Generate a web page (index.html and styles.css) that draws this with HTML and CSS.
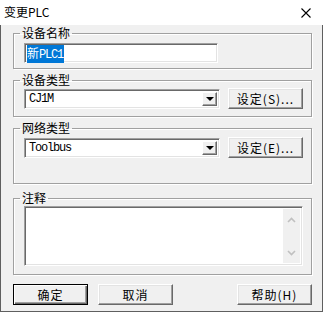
FILE: index.html
```html
<!DOCTYPE html>
<html lang="zh-CN">
<head>
    <meta charset="UTF-8">
    <title>变更PLC</title>
    <link rel="stylesheet" href="styles.css">
</head>
<body>
    <div class="window">
        <div class="titlebar">
            <span class="title">变更PLC</span>
            <svg class="close" width="10" height="10" viewBox="0 0 10 10">
                <path d="M0.5 0.5 L9.5 9.5 M9.5 0.5 L0.5 9.5" stroke="#000" stroke-width="1.1"/>
            </svg>
        </div>

        <div class="content">
            <fieldset class="group group-name">
                <legend>设备名称</legend>
                <div class="edit"><span class="selected">新<span class="mono">PLC1</span></span></div>
            </fieldset>

            <fieldset class="group group-type">
                <legend>设备类型</legend>
                <div class="row">
                    <div class="combo">
                        <span class="combo-text mono">CJ1M</span>
                        <span class="combo-btn"><i class="arrow"></i></span>
                    </div>
                    <button class="btn">设定(S)...</button>
                </div>
            </fieldset>

            <fieldset class="group group-net">
                <legend>网络类型</legend>
                <div class="row">
                    <div class="combo">
                        <span class="combo-text mono">Toolbus</span>
                        <span class="combo-btn"><i class="arrow"></i></span>
                    </div>
                    <button class="btn">设定(E)...</button>
                </div>
            </fieldset>

            <fieldset class="group group-note">
                <legend>注释</legend>
                <div class="memo">
                    <div class="memo-text"></div>
                    <div class="scrollbar">
                        <svg width="9" height="6" viewBox="0 0 9 6"><path d="M1 5 L4.5 1.5 L8 5" fill="none" stroke="#c0c0c0" stroke-width="1.6"/></svg>
                        <svg width="9" height="6" viewBox="0 0 9 6"><path d="M1 1 L4.5 4.5 L8 1" fill="none" stroke="#c0c0c0" stroke-width="1.6"/></svg>
                    </div>
                </div>
            </fieldset>

            <div class="actions">
                <button class="btn btn-default">确定</button>
                <button class="btn">取消</button>
                <span class="spacer"></span>
                <button class="btn">帮助(H)</button>
            </div>
        </div>
    </div>
</body>
</html>
```

FILE: styles.css
```css
* {
    margin: 0;
    padding: 0;
    box-sizing: border-box;
}

body {
    background: #f0f0f0;
    font-family: 'Noto Sans CJK SC', 'Liberation Sans', sans-serif;
    font-size: 12px;
    color: #000;
}

.window {
    width: 323px;
    height: 312px;
    display: flex;
    flex-direction: column;
    background: #f0f0f0;
}

.titlebar {
    height: 25px;
    background: #fff;
    display: flex;
    align-items: center;
    justify-content: space-between;
    padding: 0 12px 0 4px;
}

.title {
    font-size: 12px;
    line-height: 14px;
    padding-bottom: 1px;
}

.content {
    flex: 1;
    border: 1px solid #5f5f5f;
    border-top: none;
    padding: 1px 10px 0 12px;
    display: flex;
    flex-direction: column;
}

/* Group boxes */
.group {
    width: 299px;
    border: 1px solid #a0a0a0;
    box-shadow: inset 1px 1px 0 #fff, 1px 1px 0 #fff;
    padding: 0 7px 0 10px;
    min-width: 0;
}

.group legend {
    margin-left: -4px;
    padding: 0 2px;
    line-height: 14px;
    font-size: 12px;
}

.group-name { padding-top: 3px; padding-bottom: 5px; }
.group-type { margin-top: 4px; padding-top: 1px; padding-bottom: 7px; }
.group-net { margin-top: 4px; padding-top: 2px; padding-bottom: 25px; }
.group-note { margin-top: 7px; padding-top: 1px; padding-bottom: 8px; }

.mono {
    font-family: 'Liberation Mono', monospace;
    letter-spacing: -1.2px;
}

/* Edit box */
.edit {
    width: 194px;
    height: 20px;
    background: #fff;
    border: 1px solid;
    border-color: #a0a0a0 #fff #fff #a0a0a0;
    box-shadow: inset 1px 1px 0 #696969, inset -1px -1px 0 #e3e3e3;
    padding: 1px 0 0 2px;
    display: flex;
    align-items: center;
}

.selected {
    background: #0078d7;
    color: #fff;
    line-height: 15px;
    padding-right: 1px;
}

.row {
    display: flex;
    gap: 8px;
    align-items: center;
}

/* Combo box */
.combo {
    width: 196px;
    height: 20px;
    background: #fff;
    border: 1px solid;
    border-color: #a0a0a0 #fff #fff #a0a0a0;
    box-shadow: inset 1px 1px 0 #696969, inset -1px -1px 0 #e3e3e3;
    padding: 2px 2px 2px 4px;
    display: flex;
    align-items: center;
    justify-content: space-between;
}

.combo-text {
    line-height: 14px;
    padding-top: 1px;
}

.combo-btn {
    width: 15px;
    height: 14px;
    background: #f0f0f0;
    border: 1px solid;
    border-color: #fff #696969 #696969 #fff;
    box-shadow: inset -1px -1px 0 #a0a0a0;
    display: flex;
    align-items: center;
    justify-content: center;
}

.arrow {
    width: 0;
    height: 0;
    border-left: 4px solid transparent;
    border-right: 4px solid transparent;
    border-top: 4px solid #000;
}

/* Buttons */
.btn {
    width: 75px;
    height: 21px;
    background: #f0f0f0;
    border: 1px solid;
    border-color: #fff #696969 #696969 #fff;
    box-shadow: inset -1px -1px 0 #a0a0a0, inset 1px 1px 0 #e3e3e3;
    font-family: 'Noto Sans CJK SC', sans-serif;
    font-size: 12px;
    letter-spacing: 1px;
    color: #000;
    line-height: 14px;
}

.btn-default {
    border-color: #000;
    box-shadow: inset 1px 1px 0 #fff, inset -1px -1px 0 #696969, inset -2px -2px 0 #a0a0a0;
}

/* Memo */
.memo {
    width: 279px;
    height: 60px;
    background: #fff;
    border: 1px solid;
    border-color: #a0a0a0 #fff #fff #a0a0a0;
    box-shadow: inset 1px 1px 0 #696969, inset -1px -1px 0 #e3e3e3;
    padding: 2px 2px 2px 2px;
    display: flex;
}

.memo-text {
    flex: 1;
}

.scrollbar {
    width: 17px;
    background: #f0f0f0;
    display: flex;
    flex-direction: column;
    justify-content: space-between;
    align-items: center;
    padding: 8px 0 7px;
}

.actions {
    margin-top: 9px;
    display: flex;
    gap: 10px;
    padding-right: 0;
}

.spacer {
    flex: 1;
}
```
